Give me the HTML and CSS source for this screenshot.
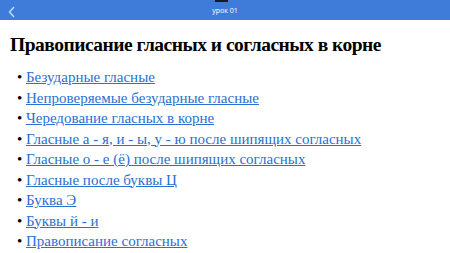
FILE: index.html
```html
<!DOCTYPE html>
<html lang="ru">
<head>
    <meta charset="UTF-8">
    <meta name="viewport" content="width=device-width, initial-scale=1.0">
    <title>урок 01</title>
    <link rel="stylesheet" href="styles.css">
</head>
<body>
    <div class="topbar">
        <div class="notch"></div>
        <a class="back" href="#">
            <svg width="8" height="12" viewBox="0 0 8 12"><path d="M6 1 L1.5 6 L6 11" fill="none" stroke="#cfe0ff" stroke-width="1.3"/></svg>
        </a>
        <span class="title">урок 01</span>
    </div>

    <div class="content">
        <h1>Правописание гласных и согласных в корне</h1>
        <ul class="topics">
            <li><a href="#">Безударные гласные</a></li>
            <li><a href="#">Непроверяемые безударные гласные</a></li>
            <li><a href="#">Чередование гласных в корне</a></li>
            <li><a href="#">Гласные а - я, и - ы, у - ю после шипящих согласных</a></li>
            <li><a href="#">Гласные о - е (ё) после шипящих согласных</a></li>
            <li><a href="#">Гласные после буквы Ц</a></li>
            <li><a href="#">Буква Э</a></li>
            <li><a href="#">Буквы й - и</a></li>
            <li><a href="#">Правописание согласных</a></li>
        </ul>
    </div>
</body>
</html>
```

FILE: styles.css
```css
body {
    margin: 0;
    padding: 0;
    background: #fff;
    font-family: "Liberation Serif", "Times New Roman", serif;
    overflow: hidden;
}

.topbar {
    position: relative;
    height: 20px;
    background: #3f7cd9;
    display: flex;
    align-items: center;
    justify-content: center;
}

.notch {
    position: absolute;
    top: 0;
    left: 215px;
    width: 13px;
    height: 2px;
    background: #1b1b1b;
}

.back {
    position: absolute;
    left: 8px;
    top: 4px;
}

.title {
    font-family: "Open Sans", "Noto Sans", sans-serif;
    font-size: 7px;
    color: #fff;
}

.content {
    padding: 0 10px;
}

h1 {
    font-size: 19.5px;
    line-height: 24px;
    letter-spacing: -0.5px;
    font-weight: bold;
    color: #000;
    margin: 13px 0 10px;
}

.topics {
    margin: 0;
    padding-left: 16px;
    list-style: none;
    font-size: 15px;
    line-height: 20.5px;
}

.topics li::before {
    content: "•";
    display: inline-block;
    width: 9px;
    margin-left: -9px;
    color: #000;
}

.topics a {
    color: #2a6fd1;
}
```
